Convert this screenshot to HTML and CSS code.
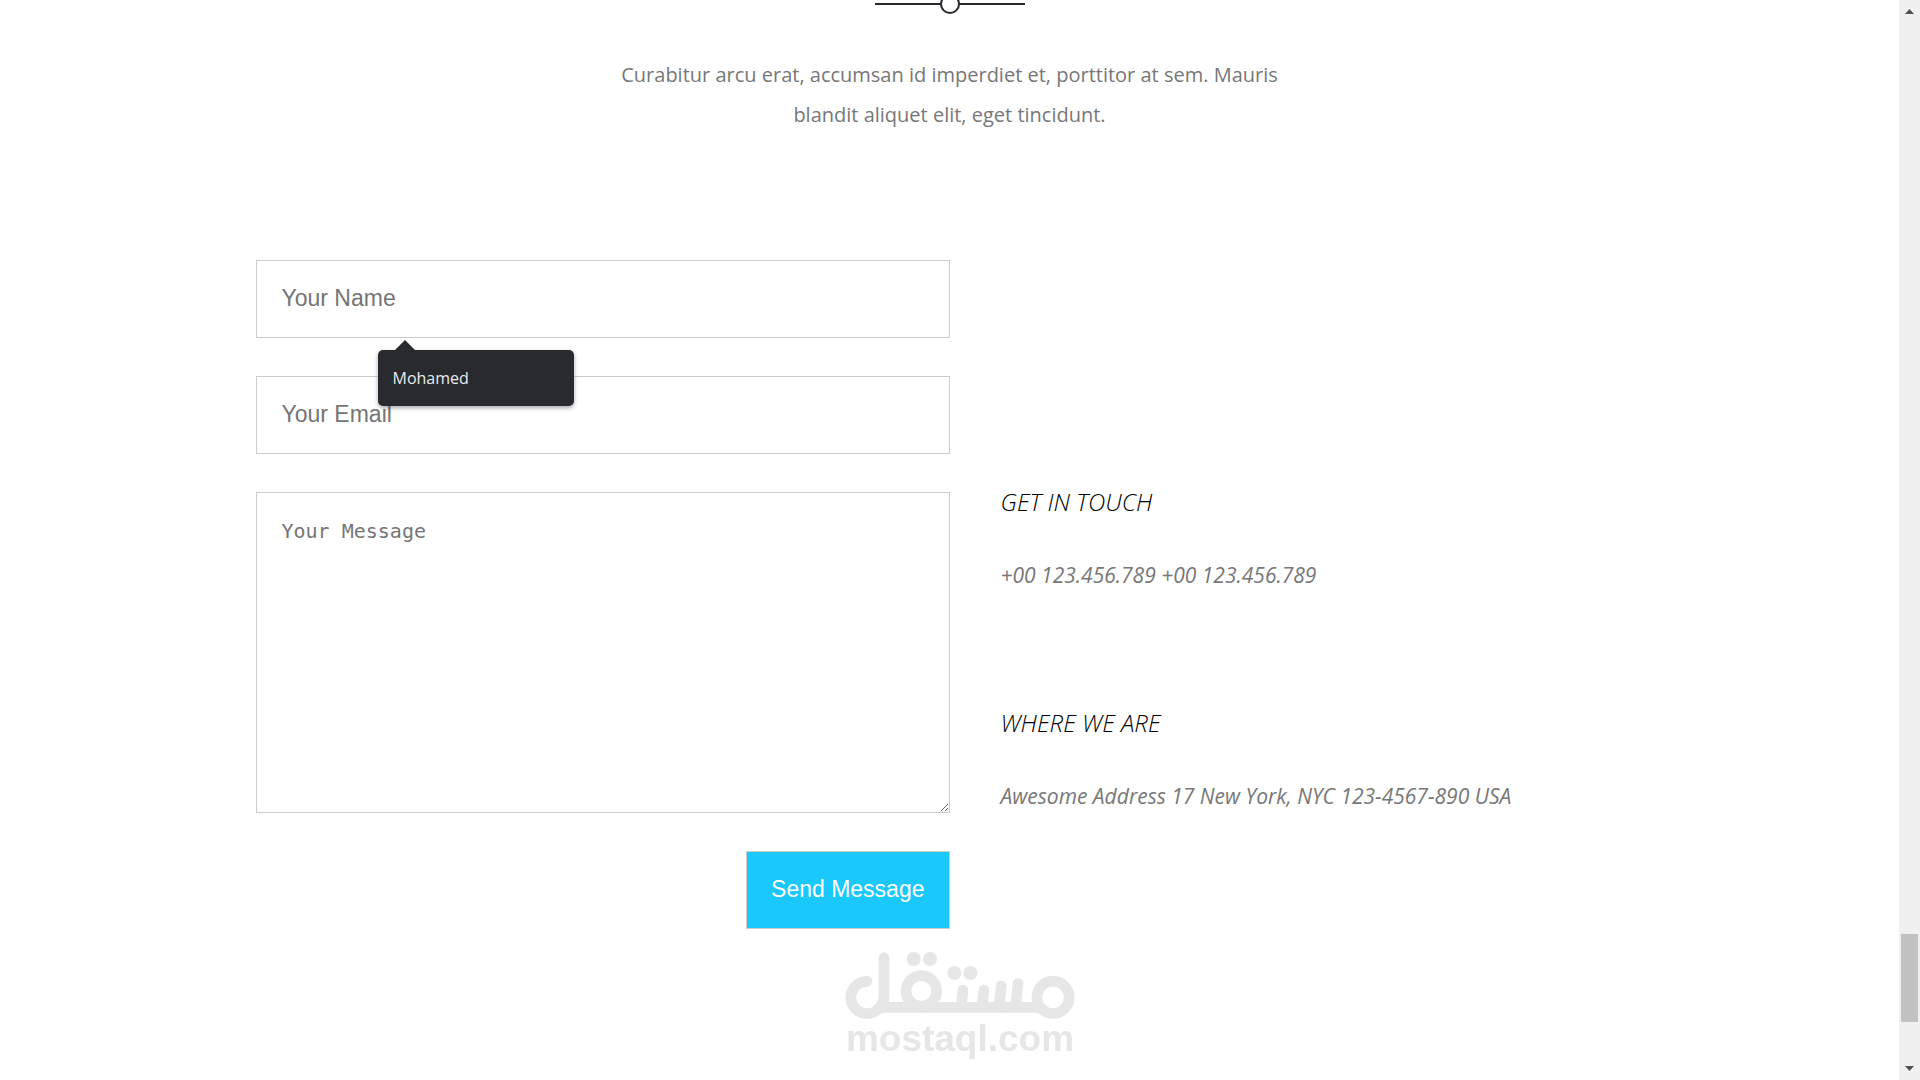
FILE: index.html
```html
<!DOCTYPE html>
<html lang="en">
<head>
<meta charset="utf-8">
<title>Contact</title>
<link rel="stylesheet" href="styles.css">
</head>
<body>
<div class="page">
  <main class="contact">
    <div class="divider"><span class="divider-dot"></span></div>
    <p class="intro">Curabitur arcu erat, accumsan id imperdiet et, porttitor at sem. Mauris blandit aliquet elit, eget tincidunt.</p>
    <div class="columns">
      <form class="form">
        <div class="field">
          <input class="control" type="text" placeholder="Your Name" aria-label="Your Name">
          <div class="suggestion">Mohamed</div>
        </div>
        <input class="control" type="email" placeholder="Your Email" aria-label="Your Email">
        <textarea class="control message" placeholder="Your Message" aria-label="Your Message"></textarea>
        <button class="send" type="button">Send Message</button>
      </form>
      <address class="info">
        <section class="block">
          <h2>Get in touch</h2>
          <p>+00 123.456.789 +00 123.456.789</p>
        </section>
        <section class="block">
          <h2>Where we are</h2>
          <p>Awesome Address 17 New York, NYC 123-4567-890 USA</p>
        </section>
      </address>
    </div>
  </main>
  <div class="scrollbar" aria-hidden="true">
    <svg class="arrow" viewBox="0 0 21 21"><path d="M6 14h9l-4.500-5z"/></svg>
    <div class="before"></div>
    <div class="thumb"></div>
    <div class="after"></div>
    <svg class="arrow" viewBox="0 0 21 21"><path d="M6 7h9l-4.500 5z"/></svg>
  </div>
</div>
<div class="watermark">
  <svg class="mark" viewBox="75 60 690 210" role="img" aria-label="مستقل">
    <g fill="none" stroke="currentColor" stroke-width="32" stroke-linecap="round" stroke-linejoin="round">
      <path d="M141 154A48.500 48.500 0 1 0 185 223Q192 213 192 200V83"/>
      <path d="M180 232H655"/>
      <circle cx="304" cy="183" r="46"/>
      <circle cx="699" cy="202" r="48.500"/>
      <path d="M429 180L424 228M492 180L486 228M544 168L537 228M594 161L587 228"/>
    </g>
    <g fill="currentColor">
      <circle cx="281" cy="87" r="21"/><circle cx="330" cy="87" r="21"/>
      <circle cx="403" cy="129" r="21"/><circle cx="451" cy="129" r="21"/>
    </g>
  </svg>
  <span>mostaql.com</span>
</div>
</body>
</html>
```
FILE: styles.css
```css
* { box-sizing: border-box; }

body {
  margin: 0;
  background: #fff;
  color: #777;
  font: 400 20px/40px "Open Sans", sans-serif;
}

h2, p { margin: 0; }

.page {
  display: grid;
  grid-template-columns: 1fr 21px;
  min-height: 100vh;
}

.contact {
  padding-top: 3px;
  overflow: hidden;
}

.divider {
  position: relative;
  width: 150px;
  height: 2px;
  margin: 0 auto;
  background: #27282d;
}

.divider-dot {
  position: absolute;
  left: 65px;
  top: -9px;
  width: 20px;
  height: 20px;
  border: 2px solid #27282d;
  border-radius: 50%;
  background: #fff;
}

.intro {
  max-width: 694px;
  margin: 50px auto 125px;
  text-align: center;
}

.columns {
  display: grid;
  grid-template-columns: 1fr 1fr;
  max-width: 1388px;
  margin: 0 auto;
}

.form {
  display: flex;
  flex-direction: column;
  gap: 38px;
}

.field { position: relative; }

.control {
  display: block;
  width: 100%;
  height: 78px;
  padding: 0 25px 2px;
  border: 1px solid #ccc;
  border-radius: 0;
  background: #fff;
  font: 23px/28px "Liberation Sans", Arial, sans-serif;
}

.control::placeholder { color: #757575; }

.message {
  height: 321px;
  padding: 24px 25px;
  font: 20px/28px "DejaVu Sans Mono", monospace;
}

.send {
  align-self: flex-end;
  height: 78px;
  padding: 0 24px 2px;
  border: 1px solid #ccc;
  background: #1ac8fc;
  color: #fff;
  font: 23px/28px "Liberation Sans", Arial, sans-serif;
}

.suggestion {
  position: absolute;
  z-index: 1;
  left: 122px;
  top: 90px;
  width: 196px;
  padding: 8px 15px;
  border-radius: 5px;
  background: #292a2d;
  box-shadow: 0 2px 4px rgba(0, 0, 0, 0.35);
  color: #e8eaed;
  font-size: 16px;
}

.suggestion::before {
  content: "";
  position: absolute;
  left: 17px;
  top: -10px;
  border: solid transparent;
  border-width: 0 10px 10px;
  border-bottom-color: #292a2d;
}

.info {
  display: flex;
  flex-direction: column;
  gap: 108px;
  padding: 222px 0 0 51px;
  font-size: 21px;
  font-style: italic;
}

.block {
  display: flex;
  flex-direction: column;
  gap: 33px;
}

.block h2 {
  color: #000;
  font-size: 24px;
  font-weight: 300;
  line-height: 40px;
  text-transform: uppercase;
}

.scrollbar {
  position: sticky;
  top: 0;
  display: flex;
  flex-direction: column;
  height: 100vh;
  background: #f0f0f0;
}

.arrow {
  width: 21px;
  height: 21px;
  fill: #505050;
}

.before { flex: 913; }

.thumb {
  flex: 88;
  margin: 0 2px;
  background: #c1c1c1;
}

.after { flex: 37; }

.watermark {
  position: fixed;
  left: 0;
  right: 0;
  bottom: 23px;
  display: flex;
  flex-direction: column;
  align-items: center;
  color: #e6e6e6;
  font: 700 37px/37px "Liberation Sans", Arial, sans-serif;
  pointer-events: none;
}

.mark {
  width: 230px;
  height: 70px;
}
```
